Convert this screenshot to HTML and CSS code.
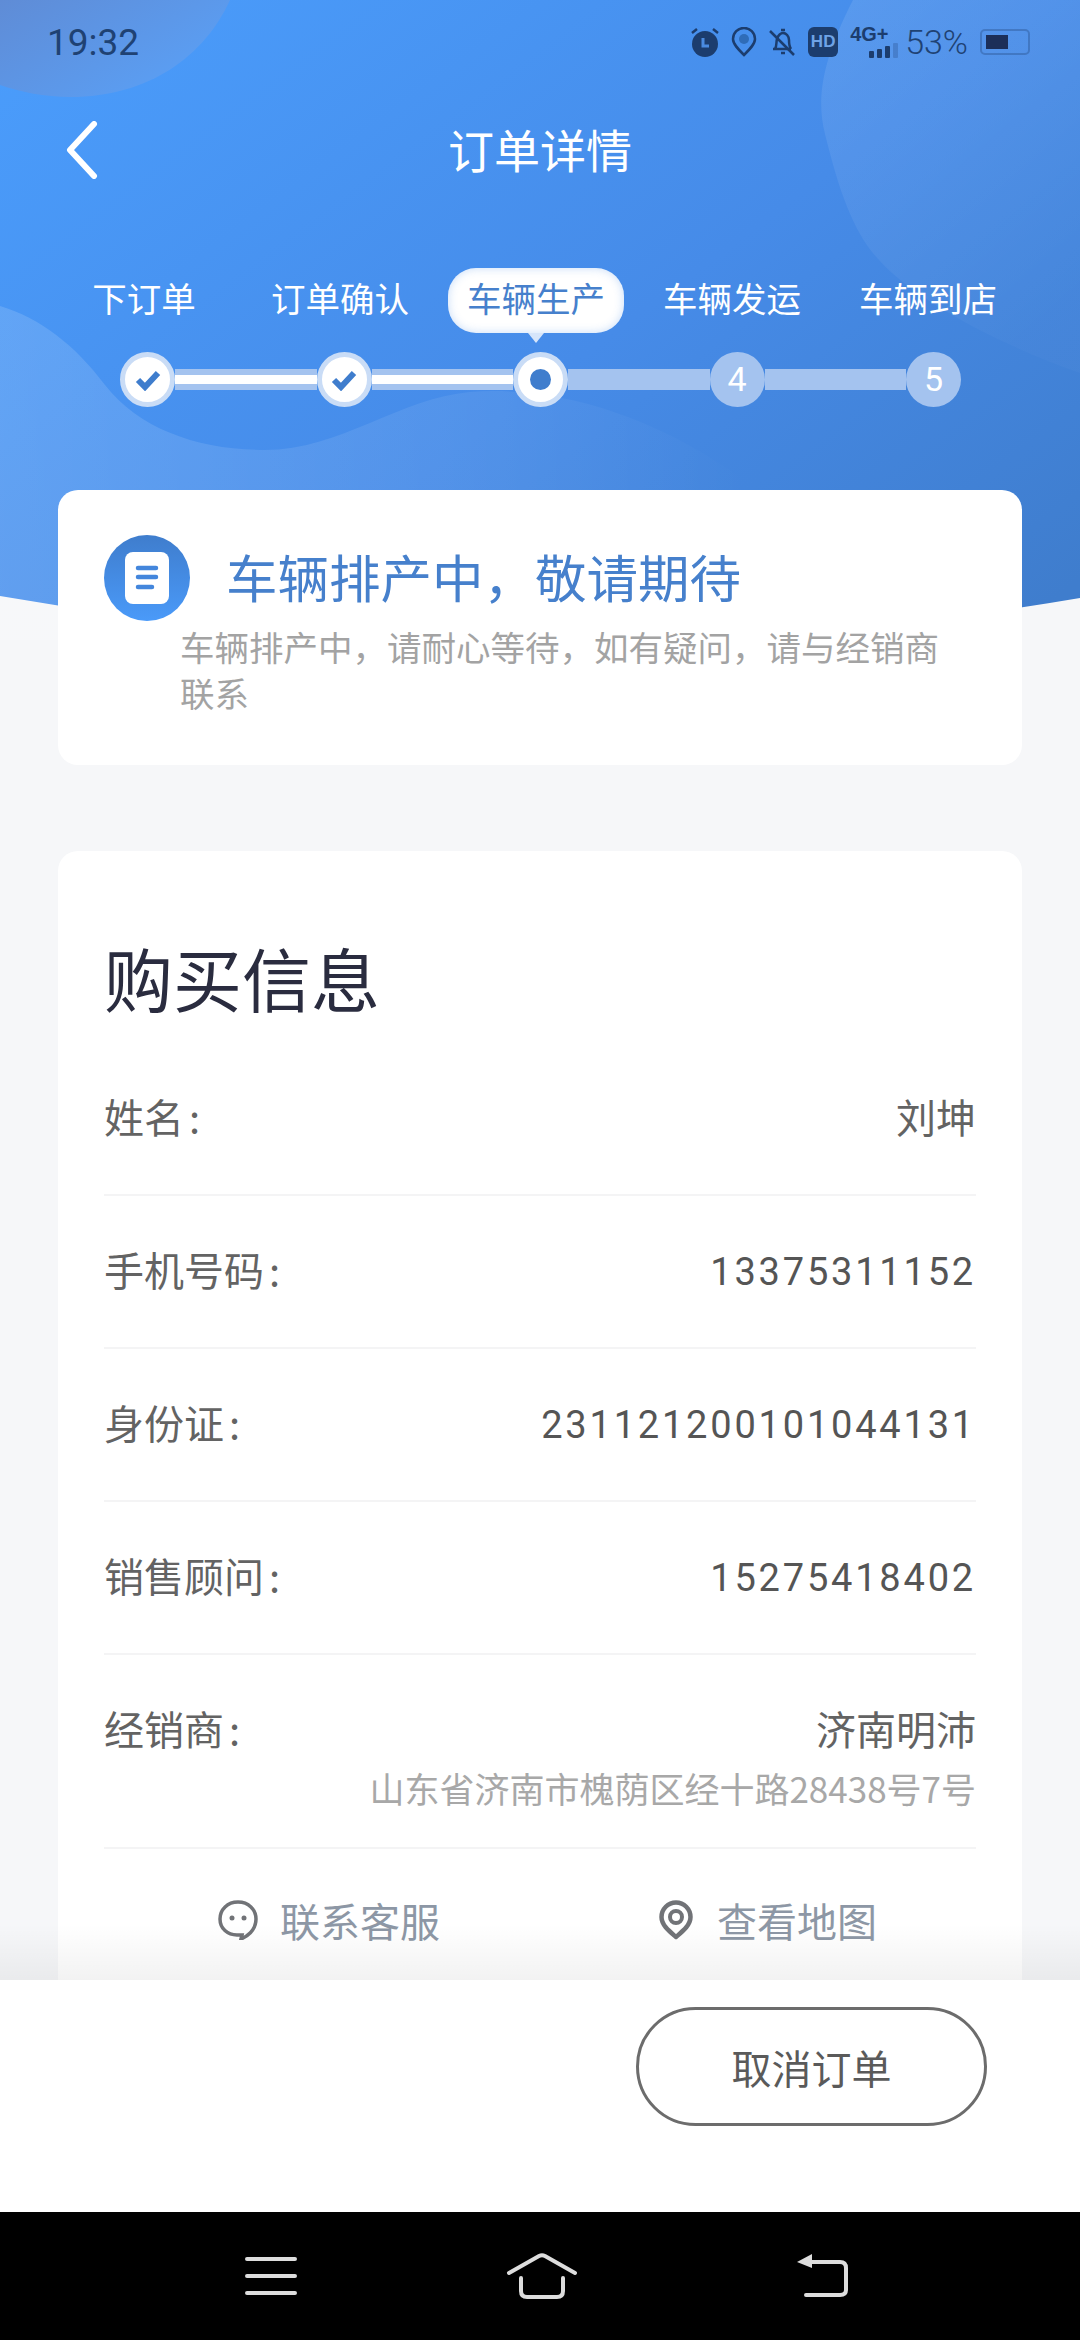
FILE: index.html
```html
<!DOCTYPE html>
<html lang="zh-CN">
<head>
    <meta charset="UTF-8">
    <meta name="viewport" content="width=device-width, initial-scale=1.0">
    <title>订单详情</title>
    <link rel="stylesheet" href="styles.css">
</head>
<body>
<div class="screen">
    <main class="main">
        <!-- blue header background -->
        <svg class="hero-bg" width="1080" height="660" viewBox="0 0 1080 660">
            <defs>
                <linearGradient id="heroFill" x1="0" y1="0.1" x2="1" y2="0.9">
                    <stop offset="0" stop-color="#4a9cfb"/>
                    <stop offset="0.55" stop-color="#468be8"/>
                    <stop offset="1" stop-color="#3f7dcd"/>
                </linearGradient>
                <linearGradient id="cornerFill" x1="0" y1="0" x2="1" y2="0.7">
                    <stop offset="0" stop-color="#5f8cd6"/>
                    <stop offset="1" stop-color="#5aa0f6"/>
                </linearGradient>
                <linearGradient id="waveFill" x1="0" y1="0" x2="1" y2="0">
                    <stop offset="0" stop-color="#fff" stop-opacity="0.14"/>
                    <stop offset="0.5" stop-color="#fff" stop-opacity="0.06"/>
                    <stop offset="0.75" stop-color="#fff" stop-opacity="0"/>
                </linearGradient>
                <linearGradient id="rightFill" x1="0" y1="0" x2="0.6" y2="1">
                    <stop offset="0" stop-color="#fff" stop-opacity="0.1"/>
                    <stop offset="1" stop-color="#fff" stop-opacity="0.02"/>
                </linearGradient>
            </defs>
            <path d="M0 0H1080V598Q540 690 0 596Z" fill="url(#heroFill)"/>
            <path d="M0 0H230C205 55 150 97 70 97C45 97 20 92 0 85Z" fill="url(#cornerFill)"/>
            <path d="M853 0C825 55 815 95 825 134C840 195 855 235 880 261C915 300 1000 345 1080 373V0Z" fill="url(#rightFill)"/>
            <path d="M0 306C40 318 75 345 105 385C140 430 200 450 265 450C340 450 400 398 470 392C550 386 640 410 730 470C820 530 900 590 1000 640L0 640Z" fill="url(#waveFill)"/>
        </svg>

        <div class="statusbar">
            <span class="time">19:32</span>
            <div class="status-icons">
                <svg width="30" height="30" viewBox="0 0 30 30">
                    <circle cx="15" cy="17" r="13" fill="#1c3d6e"/>
                    <path d="M2 6l5-4M28 6l-5-4" stroke="#1c3d6e" stroke-width="2.500" fill="none"/>
                    <path d="M13 11v8h6" stroke="#4a8be0" stroke-width="3" fill="none"/>
                </svg>
                <svg width="26" height="30" viewBox="0 0 26 30">
                    <path d="M13 28C7 22 2 17 2 12a11 11 0 0 1 22 0C24 17 19 22 13 28Z" fill="none" stroke="#1c3d6e" stroke-width="2.500"/>
                    <circle cx="13" cy="12" r="5" fill="#2f6cb8"/>
                </svg>
                <svg width="28" height="30" viewBox="0 0 28 30">
                    <path d="M5 22h18M7 22c2-3 1-7 2-10 1-4 4-6 6-6 3 0 6 3 6 7 0 3 0 6 2 9M13 26h4M13 3h4" fill="none" stroke="#1c3d6e" stroke-width="2.500"/>
                    <path d="M2 4l24 24" stroke="#1c3d6e" stroke-width="2.500"/>
                </svg>
                <span class="hd-badge">HD</span>
                <span class="net">
                    <span class="net-label">4G+</span>
                    <span class="net-bars">
                        <i class="bar bar-1"></i><i class="bar bar-2"></i><i class="bar bar-3"></i><i class="bar bar-4"></i>
                    </span>
                </span>
                <span class="percent">53%</span>
                <span class="battery"><i class="battery-level"></i></span>
            </div>
        </div>

        <header class="navbar">
            <svg class="back" width="34" height="58" viewBox="0 0 34 58">
                <path d="M29 3L5 29l24 26" fill="none" stroke="#fff" stroke-width="6" stroke-linecap="round" stroke-linejoin="round"/>
            </svg>
            <h1 class="page-title">订单详情</h1>
        </header>

        <div class="step-labels">
            <span class="step-label">下订单</span>
            <span class="step-label">订单确认</span>
            <span class="step-label current">车辆生产</span>
            <span class="step-label">车辆发运</span>
            <span class="step-label">车辆到店</span>
        </div>

        <div class="step-track">
            <span class="dot done"><svg width="26" height="22" viewBox="0 0 26 22"><path d="M3 11l7 7L23 4" fill="none" stroke="#3f7dcd" stroke-width="6"/></svg></span>
            <span class="link done"></span>
            <span class="dot done"><svg width="26" height="22" viewBox="0 0 26 22"><path d="M3 11l7 7L23 4" fill="none" stroke="#3f7dcd" stroke-width="6"/></svg></span>
            <span class="link done"></span>
            <span class="dot done"><i class="dot-now"></i></span>
            <span class="link"></span>
            <span class="dot">4</span>
            <span class="link"></span>
            <span class="dot">5</span>
        </div>

        <section class="card status-card">
            <div class="status-head">
                <span class="status-icon">
                    <svg width="44" height="52" viewBox="0 0 44 52">
                        <rect width="44" height="52" rx="8" fill="#fff"/>
                        <path d="M13 16h18M13 25h18M13 35h14" stroke="#4386dc" stroke-width="4.500" stroke-linecap="round"/>
                    </svg>
                </span>
                <h2 class="status-title">车辆排产中，敬请期待</h2>
            </div>
            <p class="status-desc">车辆排产中，请耐心等待，如有疑问，请与经销商联系</p>
        </section>

        <section class="card info-card">
            <h2 class="info-title">购买信息</h2>
            <div class="row"><span class="row-label">姓名 :</span><span class="row-value">刘坤</span></div>
            <div class="row"><span class="row-label">手机号码 :</span><span class="row-value num">13375311152</span></div>
            <div class="row"><span class="row-label">身份证 :</span><span class="row-value num">231121200101044131</span></div>
            <div class="row"><span class="row-label">销售顾问 :</span><span class="row-value num">15275418402</span></div>
            <div class="row row-tall">
                <span class="row-label">经销商 :</span>
                <div class="row-right">
                    <span class="row-value">济南明沛</span>
                    <span class="row-sub">山东省济南市槐荫区经十路28438号7号</span>
                </div>
            </div>
            <div class="actions">
                <a class="action action-chat">
                    <svg width="40" height="40" viewBox="0 0 40 40">
                        <path d="M20 2C9.500 2 2 9.500 2 19s7.500 16 17 16h5l-1 4c5-2 15-8 15-20C38 9.500 30.500 2 20 2Z" fill="none" stroke="#717377" stroke-width="3.500"/>
                        <circle cx="14" cy="18" r="2.500" fill="#717377"/>
                        <circle cx="26" cy="18" r="2.500" fill="#717377"/>
                    </svg>
                    联系客服
                </a>
                <a class="action action-map">
                    <svg width="34" height="40" viewBox="0 0 34 40">
                        <path d="M17 37C10 31 2.500 25 2.500 17a14.500 14.500 0 0 1 29 0C31.500 25 24 31 17 37Z" fill="none" stroke="#717377" stroke-width="4.500" stroke-linejoin="round"/>
                        <circle cx="17" cy="17" r="6" fill="none" stroke="#717377" stroke-width="4"/>
                    </svg>
                    查看地图
                </a>
            </div>
        </section>
        <div class="fade"></div>
    </main>

    <div class="bottom-bar">
        <button class="cancel-btn" type="button">取消订单</button>
    </div>

    <nav class="sysnav">
        <svg width="52" height="38" viewBox="0 0 52 38">
            <path d="M2 2h48M2 19h48M2 36h48" stroke="#ddd" stroke-width="4" stroke-linecap="round"/>
        </svg>
        <svg class="nav-home" width="72" height="46" viewBox="0 0 72 46">
            <path d="M3 20L33 3q3-1.500 6 0l30 17" fill="none" stroke="#ddd" stroke-width="4" stroke-linecap="round"/>
            <path d="M15 25v13q0 6 6 6h30q6 0 6-6V25" fill="none" stroke="#ddd" stroke-width="4" stroke-linecap="round"/>
        </svg>
        <svg width="54" height="44" viewBox="0 0 54 44">
            <path d="M2 8L17 0v14Z" fill="#ddd"/>
            <path d="M15 8h30q6 0 6 6v22q0 5-6 5H11" fill="none" stroke="#ddd" stroke-width="4" stroke-linecap="round"/>
        </svg>
    </nav>
</div>
</body>
</html>
```

FILE: styles.css
```css
* {
    box-sizing: border-box;
}
body {
    margin: 0;
    font-family: "Noto Sans CJK SC", "Noto Sans", sans-serif;
    background-color: #f6f7f9;
}
.screen {
    width: 1080px;
    height: 2340px;
    display: flex;
    flex-direction: column;
    overflow: hidden;
}
.main {
    position: relative;
    height: 1980px;
    overflow: hidden;
    background-color: #f6f7f9;
}
.hero-bg {
    position: absolute;
    left: 0;
    top: 0;
}
.statusbar,
.navbar,
.step-labels,
.step-track,
.card {
    position: relative;
}

/* status bar */
.statusbar {
    height: 84px;
    padding: 0 50px 0 47px;
    display: flex;
    align-items: center;
    justify-content: space-between;
    color: #1f4273;
}
.time {
    font-family: Roboto, sans-serif;
    font-size: 37px;
}
.status-icons {
    display: flex;
    align-items: center;
    gap: 11px;
}
.hd-badge {
    width: 30px;
    height: 30px;
    margin: 0 0 0 1px;
    border-radius: 6px;
    background-color: #1c3d6e;
    color: #6fa3e6;
    font-family: "Liberation Sans", sans-serif;
    font-size: 17px;
    font-weight: 700;
    line-height: 30px;
    text-align: center;
}
.net {
    width: 48px;
    height: 32px;
    margin-left: 1px;
    display: flex;
    flex-direction: column;
    justify-content: space-between;
}
.net-label {
    font-family: "Liberation Sans", sans-serif;
    font-size: 20px;
    font-weight: 700;
    line-height: 16px;
    color: #1c3d6e;
}
.net-bars {
    display: flex;
    align-items: flex-end;
    justify-content: flex-end;
    gap: 3px;
}
.bar {
    width: 5px;
    background-color: #1c3d6e;
    border-radius: 1px;
}
.bar-1 { height: 7px; }
.bar-2 { height: 9px; }
.bar-3 { height: 12px; }
.bar-4 { height: 15px; opacity: 0.25; }
.percent {
    margin-left: -4px;
    font-family: Roboto, sans-serif;
    font-size: 34px;
    font-weight: 300;
}
.battery {
    width: 50px;
    height: 26px;
    margin-left: 1px;
    padding: 4px;
    border: 2px solid rgba(28, 61, 110, 0.3);
    border-radius: 5px;
}
.battery-level {
    display: block;
    width: 22px;
    height: 100%;
    background-color: #1c2f59;
}

/* title bar */
.navbar {
    height: 132px;
    padding-bottom: 5px;
    display: flex;
    align-items: center;
    justify-content: center;
}
.back {
    position: absolute;
    left: 65px;
    top: 37px;
}
.page-title {
    margin: 0;
    font-size: 46px;
    font-weight: 400;
    color: #fff;
}

/* steps */
.step-labels {
    margin-top: 52px;
    padding-left: 46px;
    display: grid;
    grid-template-columns: repeat(5, 196px);
}
.step-label {
    position: relative;
    justify-self: center;
    height: 65px;
    padding: 0 19px;
    border-radius: 28px;
    font-size: 34.500px;
    line-height: 58px;
    color: #fff;
    white-space: nowrap;
}
.step-label.current {
    background-color: #fff;
    box-shadow: inset 0 0 10px rgba(70, 139, 232, 0.3);
    color: #4680cc;
}
.step-label.current::after {
    content: "";
    position: absolute;
    left: 50%;
    bottom: -10px;
    margin-left: -8px;
    border-left: 8px solid transparent;
    border-right: 8px solid transparent;
    border-top: 10px solid #d6e5fa;
}
.step-track {
    margin: 19px 119px 0 120px;
    height: 55px;
    display: flex;
    align-items: center;
}
.dot {
    flex: none;
    width: 55px;
    height: 55px;
    border-radius: 50%;
    background-color: #a4c3ef;
    color: #fff;
    font-family: Roboto, sans-serif;
    font-size: 34px;
    line-height: 55px;
    text-align: center;
    position: relative;
    z-index: 1;
}
.dot.done {
    background-color: #fff;
    border: 5px solid #c9dcf6;
    display: flex;
    align-items: center;
    justify-content: center;
}
.dot-now {
    width: 21px;
    height: 21px;
    border-radius: 50%;
    background-color: #3f7dcd;
}
.link {
    flex: 1;
    height: 21px;
    background-color: #a4c3ef;
}
.link.done {
    background: linear-gradient(180deg, #a4c3ef 6px, #fff 6px, #fff 15px, #a4c3ef 15px);
}

/* cards */
.card {
    margin: 0 58px;
    background-color: #fff;
    border-radius: 20px;
}
.status-card {
    margin-top: 83px;
    height: 275px;
    padding: 45px 46px 0;
}
.status-head {
    display: flex;
    align-items: center;
    gap: 36px;
}
.status-icon {
    width: 86px;
    height: 86px;
    flex: none;
    border-radius: 50%;
    background: linear-gradient(180deg, #3f7dcd, #4a9af9);
    display: flex;
    align-items: center;
    justify-content: center;
}
.status-title {
    margin: 0 0 6px;
    font-size: 51.500px;
    font-weight: 400;
    color: #4680cc;
    white-space: nowrap;
}
.status-desc {
    margin: 2px 0 0 76px;
    max-width: 775px;
    font-size: 34.500px;
    line-height: 46px;
    color: #a3a3a3;
}
.info-card {
    margin-top: 86px;
    padding: 0 46px;
    height: 1200px;
}
.info-title {
    margin: 0;
    padding: 82px 0 22px;
    font-size: 69px;
    line-height: 88px;
    font-weight: 400;
    color: #2a2c3f;
}
.row {
    height: 153px;
    padding-top: 45px;
    display: flex;
    justify-content: space-between;
    align-items: flex-start;
    border-bottom: 2px solid #f4f4f5;
}
.row-tall {
    height: 194px;
}
.row-label,
.row-value {
    font-size: 40px;
    line-height: 56px;
    color: #636363;
    word-spacing: -4px;
}
.row-value.num {
    position: relative;
    top: 3px;
    font-family: Roboto, "Noto Sans CJK SC", sans-serif;
    font-size: 38px;
    letter-spacing: 2.800px;
    color: #555;
}
.row-right {
    display: flex;
    flex-direction: column;
    align-items: flex-end;
}
.row-sub {
    font-size: 35px;
    line-height: 46px;
    margin-top: 9px;
    color: #a8a8a8;
}
.actions {
    padding-top: 43px;
    display: flex;
}
.action {
    display: flex;
    align-items: center;
    font-size: 40px;
    line-height: 56px;
    color: #8d97a5;
}
.action-chat {
    margin-left: 114px;
    gap: 22px;
}
.action-map {
    margin-left: 219px;
    gap: 24px;
}
.fade {
    position: absolute;
    left: 0;
    right: 0;
    bottom: 0;
    height: 56px;
    background: linear-gradient(180deg, rgba(0, 0, 0, 0), rgba(0, 0, 0, 0.05));
}

/* bottom */
.bottom-bar {
    height: 232px;
    padding: 27px 93px 0 0;
    display: flex;
    justify-content: flex-end;
    align-items: flex-start;
    background-color: #fff;
}
.cancel-btn {
    width: 351px;
    height: 119px;
    border: 3px solid #6c6c6c;
    border-radius: 60px;
    background-color: #fff;
    font-family: inherit;
    font-size: 40px;
    color: #5a5a5a;
}
.sysnav {
    height: 128px;
    background-color: #000;
    display: flex;
    align-items: center;
    padding: 0 231px 0 245px;
    justify-content: space-between;
}
.nav-home {
    margin-right: 8px;
}
```
